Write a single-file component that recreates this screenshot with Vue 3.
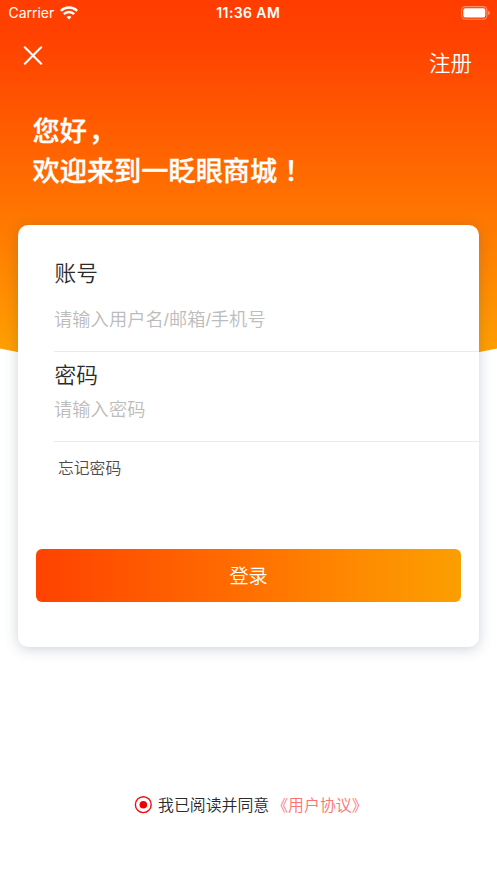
<script setup>
import { ref } from 'vue'

const account = ref('')
const password = ref('')
const agreed = ref(true)
</script>

<template>
  <main class="page">
    <svg class="backdrop" viewBox="0 0 497 376" preserveAspectRatio="none" aria-hidden="true">
      <defs>
        <linearGradient id="warm" x1="0" y1="0" x2="0" y2="1">
          <stop offset="0" stop-color="#ff3d00" />
          <stop offset="0.12" stop-color="#ff4300" />
          <stop offset="0.5" stop-color="#ff6e00" />
          <stop offset="0.94" stop-color="#ffa000" />
          <stop offset="1" stop-color="#ffa400" />
        </linearGradient>
      </defs>
      <path d="M0 0H497V348.5Q248.5 402 0 348.5Z" fill="url(#warm)" />
    </svg>

    <header class="status">
      <div class="carrier">
        <span>Carrier</span>
        <svg width="18" height="14" viewBox="0 0 18 14" fill="none" stroke="#fff" stroke-width="2.5">
          <path d="M.8 4.9Q4.2 1.5 9 1.5T17.2 4.9" />
          <path d="M3.8 8.2Q6 6 9 6T14.2 8.2" />
          <path d="M9 13.4L6.5 10.9Q9 9 11.5 10.9Z" fill="#fff" stroke="none" />
        </svg>
      </div>
      <time class="clock">11:36 AM</time>
      <svg class="battery" width="29" height="14" viewBox="0 0 29 14">
        <rect x=".6" y=".6" width="25.3" height="12.6" rx="3.6" fill="none" stroke="#fff" stroke-opacity=".42" stroke-width="1.1" />
        <rect x="2.3" y="2.3" width="22" height="9.3" rx="2" fill="#fff" />
        <path d="M27.2 4.7Q28.8 5.2 28.8 6.9T27.2 9.1Z" fill="#fff" fill-opacity=".5" />
      </svg>
    </header>

    <nav class="nav">
      <button class="close" type="button" aria-label="关闭">
        <svg width="20" height="20" viewBox="0 0 20 20" fill="none" stroke="#fff" stroke-width="2.1" stroke-linecap="round">
          <path d="M1.8 1.3L18.2 17.7M18.2 1.3L1.8 17.7" />
        </svg>
      </button>
      <a class="register">注册</a>
    </nav>

    <h1 class="greeting">您好<span class="comma">，</span><br />欢迎来到一眨眼商城<span class="bang">！</span></h1>

    <form class="card" @submit.prevent>
      <label class="field first">
        <span class="label">账号</span>
        <input v-model="account" type="text" placeholder="请输入用户名/邮箱/手机号" />
      </label>
      <label class="field second">
        <span class="label">密码</span>
        <input v-model="password" type="password" placeholder="请输入密码" />
      </label>
      <a class="forgot">忘记密码</a>
      <button class="submit" type="submit">登录</button>
    </form>

    <footer class="agreement">
      <svg width="18" height="18" viewBox="0 0 18 18" @click="agreed = !agreed">
        <circle cx="9.3" cy="8.7" r="7.9" fill="#fff" stroke="#f30b0b" stroke-width="1.4" />
        <circle v-if="agreed" cx="9.3" cy="8.7" r="3.8" fill="#f20000" />
      </svg>
      <span class="consent">我已阅读并同意</span>
      <a class="terms">《用户协议》</a>
    </footer>
  </main>
</template>

<style>
body {
  margin: 0;
  background: #fff;
}
</style>

<style scoped>
.page {
  position: relative;
  box-sizing: border-box;
  width: 100%;
  height: 883px;
  overflow: hidden;
  display: flex;
  flex-direction: column;
  background: #fff;
  font-family: "Noto Sans CJK SC", sans-serif;
  font-weight: 350;
}
.page > * {
  position: relative;
  flex: none;
}
.page > .backdrop {
  position: absolute;
  top: 0;
  left: 0;
  width: 100%;
  height: 376px;
}
.status {
  display: grid;
  grid-template-columns: 1fr auto 1fr;
  align-items: center;
  height: 26px;
  padding: 0 7px 0 8.5px;
  color: #fff;
  font: 400 14px/26px Inter, sans-serif;
}
.carrier {
  display: flex;
  align-items: center;
  gap: 6px;
  letter-spacing: -0.02px;
}
.clock {
  margin-right: 2px;
  font-weight: 600;
  letter-spacing: 0.4px;
}
.battery {
  justify-self: end;
}
.nav {
  display: flex;
  justify-content: space-between;
  align-items: flex-start;
  height: 82px;
  padding: 20px 25px 0 23px;
  box-sizing: border-box;
}
.close {
  display: flex;
  padding: 0;
  border: 0;
  background: none;
}
.register {
  color: #fff;
  font-size: 21.5px;
  line-height: 31px;
}
.greeting {
  margin: 0;
  padding: 1px 0 1px 32.5px;
  color: #fff;
  font-size: 27.2px;
  line-height: 40px;
  font-weight: 500;
  -webkit-text-stroke: 0.35px #fff;
}
.comma {
  margin-left: 2px;
}
.bang {
  margin-left: 7px;
}
.card {
  box-sizing: border-box;
  height: 422px;
  margin: 35px 18px 0;
  display: flex;
  flex-direction: column;
  border-radius: 10px;
  background: #fff;
  box-shadow: 0 2px 14px rgba(45, 65, 90, 0.24);
}
.field {
  box-sizing: border-box;
  margin-left: 36px;
  display: flex;
  flex-direction: column;
  border-bottom: 1px solid #ebebeb;
}
.first {
  height: 127px;
  padding-top: 32px;
  gap: 16px;
}
.second {
  height: 90px;
  padding-top: 7px;
  gap: 4px;
}
.label {
  padding-left: 0.5px;
  color: #2a2a2a;
  font-size: 21.7px;
  line-height: 30px;
}
.field input {
  box-sizing: border-box;
  width: 100%;
  height: 30px;
  padding: 5px 0 0;
  border: 0;
  outline: 0;
  background: none;
  color: #222;
  font: inherit;
  font-family: "Liberation Sans", "Noto Sans CJK SC", sans-serif;
  font-size: 18.2px;
  letter-spacing: 0.12px;
}
.field input::placeholder {
  color: #bcbcbc;
  opacity: 1;
}
.forgot {
  margin: 13px 0 0 40px;
  color: #4c4c4c;
  font-size: 15.8px;
  line-height: 26px;
}
.submit {
  height: 53px;
  margin: 68px 18px 0;
  padding: 0 0 2px;
  border: 0;
  border-radius: 6px;
  background: linear-gradient(90deg, #ff4200, #ff6f00 50%, #ff8900 74%, #fb9f00);
  color: #fff;
  font: inherit;
  font-size: 19.1px;
}
.agreement {
  display: flex;
  align-items: center;
  height: 26px;
  margin-top: 145px;
  padding-left: 134px;
  font-size: 15.9px;
  line-height: 26px;
}
.consent {
  margin-left: 6px;
  color: #2a2a2a;
}
.terms {
  margin-left: 3px;
  color: #fa7474;
}
</style>
